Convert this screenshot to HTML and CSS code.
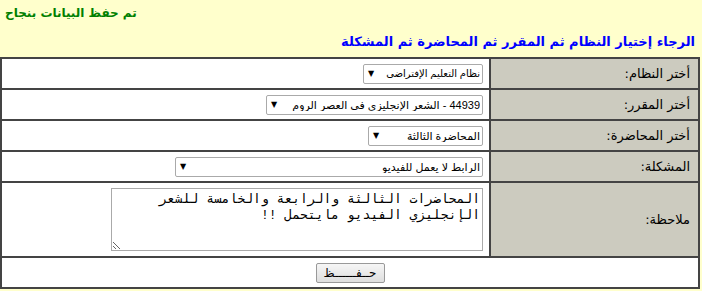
FILE: index.html
```html
<!DOCTYPE html>
<html lang="ar">
<head>
    <meta charset="UTF-8">
    <title>تسجيل مشكلة</title>
    <link rel="stylesheet" href="styles.css">
</head>
<body>
    <div class="msg-success">تم حفظ البيانات بنجاح</div>
    <div class="msg-info" dir="rtl">الرجاء إختيار النظام ثم المقرر ثم المحاضرة ثم المشكلة</div>

    <form>
        <table class="report" dir="rtl">
            <tr>
                <td class="label">أختر النظام:</td>
                <td class="field">
                    <span class="select-wrap">
                        <select class="sel-system">
                            <option>نظام التعليم الإفتراضي</option>
                        </select>
                    </span>
                </td>
            </tr>
            <tr>
                <td class="label">أختر المقرر:</td>
                <td class="field">
                    <span class="select-wrap">
                        <select class="sel-course">
                            <option>44939 - الشعر الإنجليزي في العصر الروم</option>
                        </select>
                    </span>
                </td>
            </tr>
            <tr>
                <td class="label">أختر المحاضرة:</td>
                <td class="field">
                    <span class="select-wrap">
                        <select class="sel-lecture">
                            <option>المحاضرة الثالثة</option>
                        </select>
                    </span>
                </td>
            </tr>
            <tr>
                <td class="label">المشكلة:</td>
                <td class="field">
                    <span class="select-wrap">
                        <select class="sel-problem">
                            <option>الرابط لا يعمل للفيديو</option>
                        </select>
                    </span>
                </td>
            </tr>
            <tr class="row-note">
                <td class="label">ملاحظة:</td>
                <td class="field">
                    <textarea class="note">المحاضرات الثالثة والرابعة والخامسة للشعر الإنجليزي الفيديو مايتحمل !!</textarea>
                </td>
            </tr>
            <tr>
                <td class="actions" colspan="2">
                    <button type="submit">حــفــــــظ</button>
                </td>
            </tr>
        </table>
    </form>
</body>
</html>
```

FILE: styles.css
```css
* {
    box-sizing: border-box;
}

body {
    margin: 0;
    background-color: #ffffcc;
    font-family: Tahoma, "DejaVu Sans", sans-serif;
    font-size: 13px;
}

/* Messages */
.msg-success {
    color: #008000;
    font-weight: bold;
    font-size: 12px;
    padding: 6px 5px 0;
    height: 30px;
}

.msg-info {
    color: #0000ff;
    font-weight: bold;
    padding: 4px 7px 0;
    height: 27px;
}

/* Form table */
.report {
    width: 700px;
    border-collapse: collapse;
    background-color: #fff;
}

.report td {
    border: 2px solid #444;
    padding: 0 6px;
    height: 31px;
}

.report .label {
    width: 209px;
    padding-right: 8px;
    background-color: #cccbbf;
    color: #000;
}

/* Select with arrow on the left */
.select-wrap {
    position: relative;
    display: inline-block;
    vertical-align: middle;
}

.select-wrap::after {
    content: "▼";
    position: absolute;
    left: 5px;
    top: 5px;
    font-size: 8px;
    color: #000;
    pointer-events: none;
}

.report select {
    -webkit-appearance: none;
    appearance: none;
    display: block;
    height: 20px;
    padding: 0 2px 0 16px;
    font-family: Arial, "DejaVu Sans", sans-serif;
    font-size: 11px;
    color: #000;
    border: 1px solid #aaa;
    border-radius: 2px;
    background-color: #fff;
}

.report .sel-system {
    width: 120px;
    font-size: 10px;
}

.sel-course { width: 217px; }
.sel-lecture { width: 115px; }
.sel-problem { width: 308px; }

.row-note td {
    height: 75px;
}

.note {
    display: block;
    width: 372px;
    height: 63px;
    border: 1px solid #aaa;
    font-family: "Liberation Mono", monospace;
    font-size: 13px;
    letter-spacing: 1px;
    padding: 2px;
    resize: both;
}

.actions {
    text-align: center;
}

.actions button {
    width: 69px;
    height: 20px;
    font-size: 12px;
    font-family: Tahoma, "DejaVu Sans", sans-serif;
    border: 1px solid #999;
    border-radius: 2px;
    background: linear-gradient(#f6f6f6, #dedede);
}
```
